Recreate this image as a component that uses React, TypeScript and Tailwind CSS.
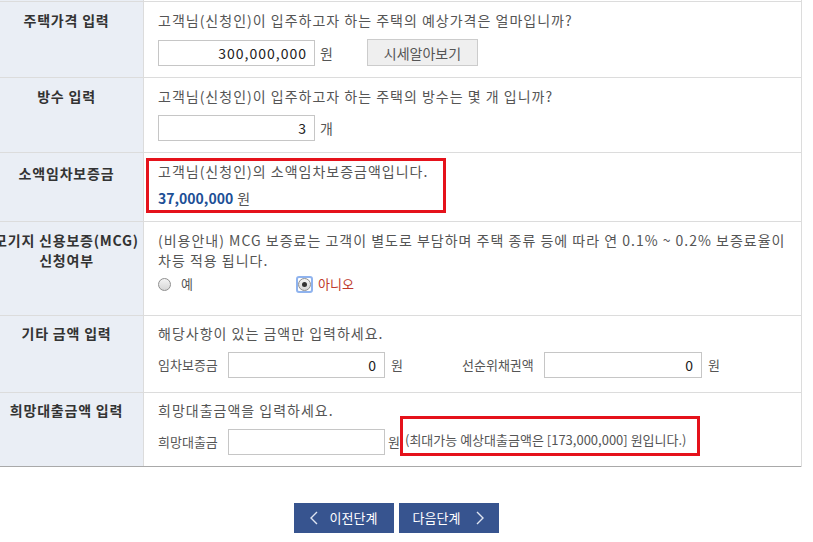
import React from "react";

const ROW = "flex border-b border-[#dcdcdc]";
const LABEL =
  "w-[154px] shrink-0 bg-[#eaeef5] border-r border-[#dcdcdc] text-center font-bold text-[#333] leading-5 tracking-[0.8px]";
const CELL = "flex-1 pl-[14px] text-[#555] leading-5 tracking-[1px]";
const INPUT =
  "h-[26px] border border-[#c6c6c6] bg-white text-right pr-[7px] text-[#222] text-sm tracking-[1px] outline-none";
const SUB = "text-[13px] tracking-normal";

const Chevron: React.FC<{ dir: "left" | "right" }> = ({ dir }) => (
  <svg width="8" height="14" viewBox="0 0 8 14" fill="none">
    <polyline
      points={dir === "left" ? "7,1 1,7 7,13" : "1,1 7,7 1,13"}
      stroke="#dfe5f1"
      strokeWidth="1.4"
    />
  </svg>
);

const Radio: React.FC<{ checked?: boolean }> = ({ checked }) => {
  const circle = (
    <span className="flex h-[13px] w-[13px] items-center justify-center rounded-full border border-[#8f8f8f] bg-gradient-to-b from-[#f4f4f4] to-[#d6d6d6]">
      {checked && <span className="h-[5px] w-[5px] rounded-full bg-[#333]" />}
    </span>
  );
  if (!checked) return circle;
  return (
    <span className="flex h-[17px] w-[17px] items-center justify-center rounded-[3px] border-2 border-[#8fb3ee]">
      {circle}
    </span>
  );
};

export default function App() {
  return (
    <div className="min-h-screen bg-white font-['Noto_Sans_CJK_KR','Noto_Sans',sans-serif] text-sm">
      <div className="-ml-[10px] w-[812px] border-r border-[#dcdcdc]">
        {/* sliver of the row above */}
        <div className={`${ROW} h-[2px]`}>
          <div className="w-[154px] shrink-0 bg-[#eaeef5] border-r border-[#dcdcdc]" />
        </div>

        {/* 주택가격 */}
        <div className={`${ROW} h-[76px]`}>
          <div className={`${LABEL} pt-[8px]`}>주택가격 입력</div>
          <div className={`${CELL} pt-[8px]`}>
            <p>고객님(신청인)이 입주하고자 하는 주택의 예상가격은 얼마입니까?</p>
            <div className="mt-[9px] flex items-center">
              <input className={`${INPUT} w-[157px]`} value="300,000,000" readOnly />
              <span className="ml-[5px]">원</span>
              <button className="ml-[33px] h-[27px] w-[111px] border border-[#cccccc] bg-[#efefef] text-[#555] tracking-normal">
                시세알아보기
              </button>
            </div>
          </div>
        </div>

        {/* 방수 */}
        <div className={`${ROW} h-[75px]`}>
          <div className={`${LABEL} pt-[8px]`}>방수 입력</div>
          <div className={`${CELL} pt-[8px]`}>
            <p>고객님(신청인)이 입주하고자 하는 주택의 방수는 몇 개 입니까?</p>
            <div className="mt-[9px] flex items-center">
              <input className={`${INPUT} w-[157px]`} value="3" readOnly />
              <span className="ml-[5px]">개</span>
            </div>
          </div>
        </div>

        {/* 소액임차보증금 */}
        <div className={`${ROW} h-[69px]`}>
          <div className={`${LABEL} pt-[10px]`}>소액임차보증금</div>
          <div className="flex-1 pl-[2px] pt-[5px] leading-5 text-[#555] tracking-[1px]">
            <div className="h-[55px] w-[300px] border-[3px] border-[#e5121b] pl-[9px]">
              <p>고객님(신청인)의 소액임차보증금액입니다.</p>
              <p className="mt-[7px]">
                <span className="font-bold text-[#1d4f96] tracking-normal">37,000,000</span> 원
              </p>
            </div>
          </div>
        </div>

        {/* MCG */}
        <div className={`${ROW} h-[94px]`}>
          <div className={`${LABEL} pt-[8px] whitespace-nowrap flex flex-col items-center`}>
            <span>모기지 신용보증(MCG)</span>
            <span>신청여부</span>
          </div>
          <div className={`${CELL} pt-[8px]`}>
            <p className="whitespace-nowrap">
              (비용안내) MCG 보증료는 고객이 별도로 부담하며 주택 종류 등에 따라 연 0.1% ~ 0.2% 보증료율이
              <br />
              차등 적용 됩니다.
            </p>
            <div className="mt-[4px] flex h-5 items-center">
              <div className="flex w-[138px] items-center">
                <Radio />
                <span className={`ml-[10px] ${SUB}`}>예</span>
              </div>
              <Radio checked />
              <span className={`ml-[5px] text-[#c0392b] ${SUB}`}>아니오</span>
            </div>
          </div>
        </div>

        {/* 기타 금액 */}
        <div className={`${ROW} h-[77px]`}>
          <div className={`${LABEL} pt-[7px]`}>기타 금액 입력</div>
          <div className={`${CELL} pt-[7px]`}>
            <p>해당사항이 있는 금액만 입력하세요.</p>
            <div className="mt-[9px] flex items-center">
              <span className={`w-[70px] ${SUB}`}>임차보증금</span>
              <input className={`${INPUT} w-[157px]`} value="0" readOnly />
              <span className={`w-[77px] pl-[6px] ${SUB}`}>원</span>
              <span className={`w-[82px] ${SUB}`}>선순위채권액</span>
              <input className={`${INPUT} w-[158px]`} value="0" readOnly />
              <span className={`pl-[6px] ${SUB}`}>원</span>
            </div>
          </div>
        </div>

        {/* 희망대출금액 */}
        <div className="flex h-[74px] border-b border-[#a9a9a9]">
          <div className={`${LABEL} pt-[7px]`}>희망대출금액 입력</div>
          <div className={`${CELL} pt-[7px]`}>
            <p>희망대출금액을 입력하세요.</p>
            <div className="-mt-[4px] flex items-end">
              <span className={`mb-px w-[70px] leading-[26px] ${SUB}`}>희망대출금</span>
              <input className={`${INPUT} mb-px w-[157px]`} value="" readOnly />
              <span className={`mb-px ml-[3px] w-[12px] leading-[26px] ${SUB}`}>원</span>
              <div className={`h-[40px] w-[300px] whitespace-nowrap border-[3px] border-[#e5121b] pl-[2px] pt-[11px] leading-5 text-[#555] ${SUB}`}>
                (최대가능 예상대출금액은 [173,000,000] 원입니다.)
              </div>
            </div>
          </div>
        </div>
      </div>

      <div className="-ml-[10px] mt-[36px] flex w-[812px] justify-center gap-[5px]">
        <button className="flex h-[30px] w-[100px] items-center justify-center gap-3 bg-[#37548f] text-[13px] text-white">
          <Chevron dir="left" />
          <span>이전단계</span>
        </button>
        <button className="flex h-[30px] w-[100px] items-center justify-center gap-4 bg-[#37548f] text-[13px] text-white">
          <span>다음단계</span>
          <Chevron dir="right" />
        </button>
      </div>
    </div>
  );
}
